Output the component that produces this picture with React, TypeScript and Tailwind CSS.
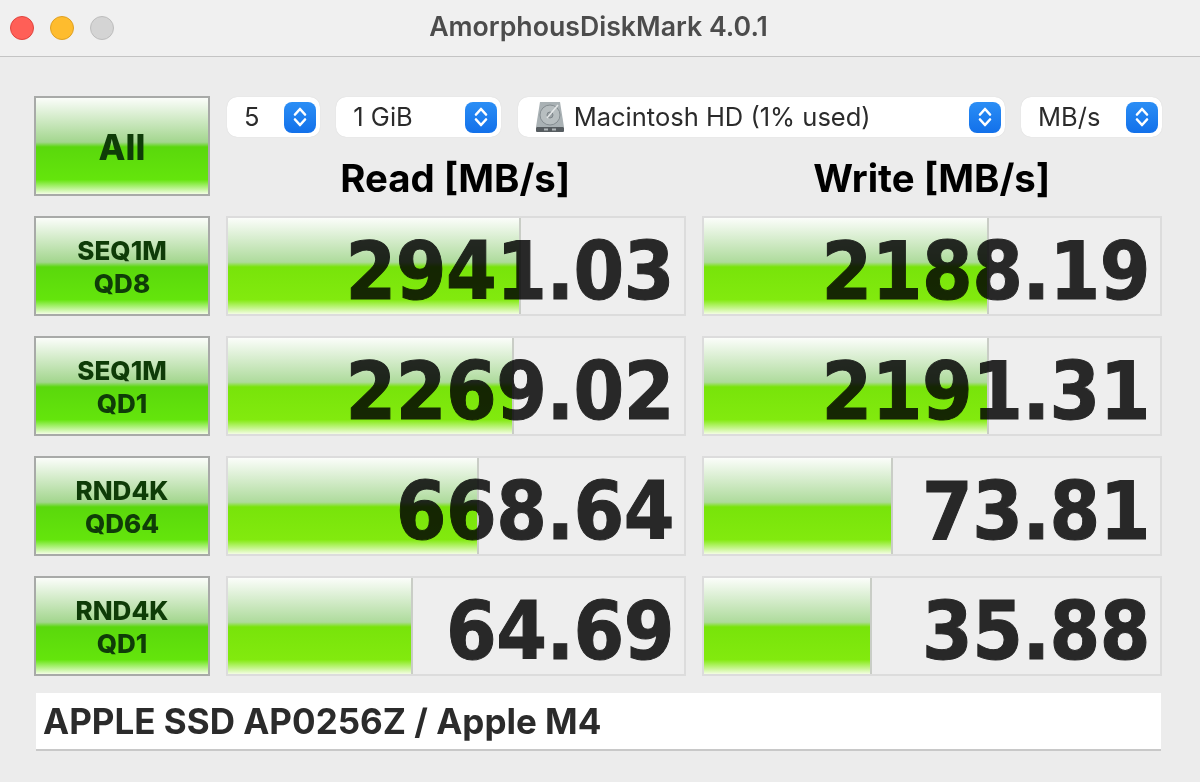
import React from 'react';

const font = "font-['Inter','Liberation_Sans',sans-serif]";

interface Bench {
  top: string;
  bottom: string;
  read: { value: string; bar: number };
  write: { value: string; bar: number };
}

const rows: Bench[] = [
  { top: 'SEQ1M', bottom: 'QD8', read: { value: '2941.03', bar: 293 }, write: { value: '2188.19', bar: 285 } },
  { top: 'SEQ1M', bottom: 'QD1', read: { value: '2269.02', bar: 286 }, write: { value: '2191.31', bar: 285 } },
  { top: 'RND4K', bottom: 'QD64', read: { value: '668.64', bar: 251 }, write: { value: '73.81', bar: 189 } },
  { top: 'RND4K', bottom: 'QD1', read: { value: '64.69', bar: 185 }, write: { value: '35.88', bar: 168 } },
];

const Stepper = () => (
  <span className="w-[32px] h-[31px] rounded-[8px] bg-gradient-to-b from-[#2b8ef5] to-[#1270ea] flex items-center justify-center">
    <svg width="16" height="24" viewBox="0 0 16 24" fill="none" stroke="#ffffff" strokeWidth="2.6" strokeLinecap="round" strokeLinejoin="round">
      <path d="M3 9.5 8 4l5 5.5" />
      <path d="M3 14.5 8 20l5-5.5" />
    </svg>
  </span>
);

const DiskIcon = () => (
  <svg width="30" height="32" viewBox="0 0 30 32">
    <path d="M5 1h20l4 25H1z" fill="#a9b1b4" />
    <ellipse cx="15" cy="14" rx="10" ry="10" fill="#b7bec0" stroke="#868e92" strokeWidth="1" />
    <ellipse cx="15" cy="14" rx="3" ry="3" fill="#9aa2a5" stroke="#7c8488" strokeWidth="1" />
    <path d="M23 4 12 17" stroke="#e4e7e8" strokeWidth="1.5" />
    <rect x="1" y="26" width="28" height="5" rx="1" fill="#565c60" />
    <rect x="9" y="27.5" width="4" height="2" fill="#aeb4b6" />
    <rect x="17" y="27.5" width="4" height="2" fill="#aeb4b6" />
  </svg>
);

const Select = ({ width, label, icon }: { width: string; label: string; icon?: boolean }) => (
  <div className={`${width} h-[40px] bg-white rounded-[10px] shadow-[0_0_1px_rgba(0,0,0,0.15)] flex items-center justify-between pr-[4px] pl-[17px]`}>
    <span className="flex items-center gap-[9px] text-[25.5px] leading-none text-[#2b2b2b] whitespace-nowrap -mt-[1px]">
      {icon && <DiskIcon />}
      {label}
    </span>
    <Stepper />
  </div>
);

const GreenButton = ({ children, large }: { children: React.ReactNode; large?: boolean }) => (
  <button
    className={`w-[176px] h-[100px] border-[2px] border-[#a8aaa8] bg-[linear-gradient(to_bottom,#fbfdfa_0%,#a3d68e_46%,#5ad80c_51%,#64e50c_85%,#f3fde4_100%)] font-extrabold text-[#0f3c08] pt-[2px] ${large ? 'text-[35px]' : 'text-[26px] leading-[33px]'}`}
  >
    {children}
  </button>
);

const Meter = ({ value, bar }: { value: string; bar: number }) => (
  <div className="relative h-[100px] border-[2px] border-[#dcdcdc] bg-[#eeeeee]">
    <div
      className="h-full border-r-[2px] border-[#c9cdc6] bg-[linear-gradient(to_bottom,#fbfdfa_0%,#aedb9c_46%,#78e40a_51%,#82ea0e_85%,#f3fde2_100%)]"
      style={{ width: bar }}
    />
    <span className="absolute right-[10px] top-0 h-full flex items-center pt-[10px] font-['DejaVu_Sans_Condensed','DejaVu_Sans',sans-serif] text-[81px] font-bold text-[#2a2a2a] [-webkit-text-stroke:1px_#2a2a2a] mix-blend-multiply tracking-[-0.5px] leading-none">
      {value}
    </span>
  </div>
);

export default function App() {
  return (
    <div className={`w-[1200px] h-[782px] bg-[#ececec] overflow-hidden ${font}`}>
      <div className="h-[57px] bg-[#f0f0f0] border-b-[1px] border-[#c4c4c4] relative flex items-center justify-center pr-[3px]">
        <div className="absolute left-[10px] top-[16px] flex gap-[16px]">
          <span className="w-[24px] h-[24px] rounded-full bg-[#ff5f57] border border-[#e0443e]" />
          <span className="w-[24px] h-[24px] rounded-full bg-[#febc2e] border border-[#dfa023]" />
          <span className="w-[24px] h-[24px] rounded-full bg-[#d4d4d4] border border-[#bdbdbd]" />
        </div>
        <span className="text-[26.7px] font-semibold text-[#4c4c4c] -mt-[3px]">AmorphousDiskMark 4.0.1</span>
      </div>

      <div className="pl-[34px] pr-[38px] pt-[39px]">
        <div className="grid grid-cols-[176px_460px_460px] gap-x-[16px] gap-y-[20px]">
          <GreenButton large>All</GreenButton>
          <div className="col-span-2 h-[100px] pt-[1px]">
            <div className="flex justify-between pl-[1px]">
              <Select width="w-[93px]" label="5" />
              <Select width="w-[165px]" label="1 GiB" />
              <Select width="w-[487px]" label="Macintosh HD (1% used)" icon />
              <Select width="w-[141px]" label="MB/s" />
            </div>
            <div className="grid grid-cols-2 gap-x-[16px] text-center text-[38.4px] font-bold text-black leading-none mt-[22px] -ml-[1px]">
              <span>Read [MB/s]</span>
              <span>Write [MB/s]</span>
            </div>
          </div>

          {rows.map((r) => (
            <React.Fragment key={r.top + r.bottom}>
              <GreenButton>
                {r.top}
                <br />
                {r.bottom}
              </GreenButton>
              <Meter value={r.read.value} bar={r.read.bar} />
              <Meter value={r.write.value} bar={r.write.bar} />
            </React.Fragment>
          ))}
        </div>

        <div className="mt-[17px] ml-[2px] w-[1125px] h-[58px] bg-white border-b-[2px] border-[#c8c8c8] flex items-center pl-[7px] text-[35px] font-bold text-[#2b2b2b]">
          APPLE SSD AP0256Z / Apple M4
        </div>
      </div>
    </div>
  );
}
